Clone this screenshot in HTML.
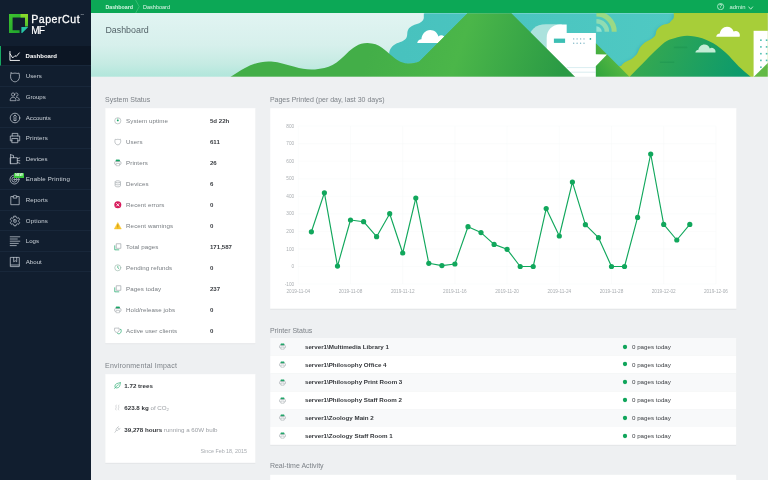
<!DOCTYPE html>
<html lang="en">
<head>
<meta charset="utf-8">
<title>PaperCut MF : Dashboard</title>
<style>
html,body{margin:0;padding:0;}
body{width:768px;height:480px;overflow:hidden;background:#eef0f2;font-family:"Liberation Sans",sans-serif;color:#333;position:relative;-webkit-font-smoothing:antialiased;}
.abs{position:absolute;}
*{box-sizing:border-box;}
/* sidebar */
#side{left:0;top:0;width:91.2px;height:480px;background:#111e2f;}
#logo-t1{left:31.2px;top:12.5px;font-size:10.6px;line-height:13px;color:#fff;letter-spacing:.52px;white-space:nowrap;-webkit-text-stroke:.28px #fff;}
#logo-t2{left:31.2px;top:25.1px;font-size:10.05px;line-height:12px;color:#fff;white-space:nowrap;letter-spacing:-.7px;-webkit-text-stroke:.2px #fff;}
.mi{left:0;width:91.2px;height:20.58px;border-bottom:.5px solid #18273a;color:#ccd3da;font-size:6.1px;line-height:20.4px;padding-left:25.8px;white-space:nowrap;}
.mi.act{background:#0c1624;color:#fff;font-weight:bold;font-size:6px;border-left:1.6px solid #17a862;padding-left:24.6px;}
.mi svg{position:absolute;left:8.6px;top:4.1px;width:12px;height:12px;overflow:visible;}
.mi.act svg{left:7px;}
/* top bar */
#top{left:91.2px;top:0;width:676.8px;height:15px;background:linear-gradient(180deg,#0ca856 12.9px,rgba(12,168,86,0) 13.9px);color:#d6f7e4;font-size:5.3px;line-height:14px;white-space:nowrap;}
#banner{left:91.2px;top:13px;width:676.8px;height:65px;overflow:hidden;background:linear-gradient(180deg,#e1f4f2 0,#d7f0ec 32px,#c5ebe3 51px,#b1e6db 63.7px);}
#ptitle{left:105.4px;top:24px;font-size:8.9px;line-height:12px;color:#55656a;white-space:nowrap;}
/* section titles */
.st{font-size:7px;line-height:9px;color:#7d8288;white-space:nowrap;}
.card{background:#fff;box-shadow:0 0 .6px rgba(0,0,0,.12);}
.row{left:105.4px;width:150.4px;height:21px;font-size:6.2px;line-height:21px;color:#777c81;white-space:nowrap;}
.row .lb{position:absolute;left:20.7px;top:0;letter-spacing:.07px;}
.row .vl{position:absolute;left:104.6px;top:0;font-weight:bold;font-size:6.1px;color:#3a3d42;}
.row svg{position:absolute;left:8.6px;top:7.6px;width:7.6px;height:7.6px;overflow:visible;}
.env{left:105.4px;width:150.4px;height:12px;font-size:6.2px;line-height:12px;color:#9a9ea3;white-space:nowrap;}
.env b{color:#33363a;}
.env span{position:absolute;left:18.9px;top:0;}
.env svg{position:absolute;left:8.8px;top:2.4px;width:7px;height:7px;overflow:visible;}
.pr{left:270.4px;width:465.6px;height:17.8px;font-size:6.2px;line-height:17.8px;white-space:nowrap;color:#3d4045;}
.pr b{position:absolute;left:34.6px;top:0;color:#34373b;}
.pr svg.dot{left:351.4px;top:5.9px;width:6px;height:6px;}
.pr em{position:absolute;left:361.6px;top:0;font-style:normal;}
.pr svg{position:absolute;left:8.6px;top:5.4px;width:7px;height:7px;overflow:visible;}
</style>
</head>
<body>
<div id="wrap" class="abs" style="left:0;top:0;width:768px;height:480px;overflow:hidden;will-change:transform">

<!-- ===== sidebar ===== -->
<div id="side" class="abs">
  <svg class="abs" style="left:8.7px;top:13.7px" width="19.6" height="19.8" viewBox="0 0 19.6 19.8">
    <defs>
      <linearGradient id="lg1" x1="0" y1="0" x2="1" y2="1"><stop offset="0" stop-color="#3fc32f"/><stop offset="1" stop-color="#159a2c"/></linearGradient>
      <linearGradient id="lg2" x1="0" y1="0" x2="0" y2="1"><stop offset="0" stop-color="#8fdc2a"/><stop offset="1" stop-color="#4fc22e"/></linearGradient>
    </defs>
    <path d="M0 0H19.6V3.6H3.6V16.2H10.6V19.8H0Z" fill="url(#lg1)"/>
    <path d="M11.6 0H19.6V12.4H16V3.6H11.6Z" fill="url(#lg2)"/>
    <path d="M12.4 12.9H19.4L12.4 19.8Z" fill="#27c5a6"/>
  </svg>
  <div id="logo-t1" class="abs">PaperCut</div>
  <div class="abs" style="left:80.6px;top:13.2px;font-size:2.4px;line-height:3px;color:#cfd5db;letter-spacing:0">TM</div>
  <div id="logo-t2" class="abs">MF</div>

  <div class="mi act abs" style="top:45.90px"><svg viewBox="0 0 24 24"><g fill="none" stroke="#ffffff" stroke-width="1.8" stroke-linecap="round" stroke-linejoin="round"><g transform="translate(1.4 0.4)"><path d="M2.5 2.5V20.5H21.6"/><path d="M2.8 7.5L8 15.5L12.6 10.8L15 12.6L21.2 5.4"/></g></g></svg>Dashboard</div>
  <div class="mi abs" style="top:66.48px"><svg viewBox="0 0 24 24" ><g fill="none" stroke="#c9d0d8" stroke-width="1.45" stroke-linecap="round" stroke-linejoin="round"><path d="M4.2 4C6.6 5.8 9 4.2 12 4.2C15 4.2 17.4 5.8 19.8 4C21.6 9 21.4 14.5 18.6 18.2C16.6 20.8 14 21.6 12 21.6C10 21.6 7.4 20.8 5.4 18.2C2.6 14.5 2.4 9 4.2 4Z"/></g></svg>Users</div>
  <div class="mi abs" style="top:87.06px"><svg viewBox="0 0 24 24" ><g fill="none" stroke="#c9d0d8" stroke-width="1.45" stroke-linecap="round" stroke-linejoin="round"><g transform="translate(0.6 0.2) scale(.9)"><circle cx="8.4" cy="7.6" r="3.6"/><path d="M1.8 20.4C1.8 16 4.6 13.6 8.4 13.6C12.2 13.6 15 16 15 20.4Z"/><path d="M14.2 4.4C16.6 3.6 19.4 5 19.4 7.8C19.4 10 17.8 11.4 16 11.4"/><path d="M15.6 13.6C19.6 13.4 22.4 16 22.4 20.4H18"/></g></g></svg>Groups</div>
  <div class="mi abs" style="top:107.64px"><svg viewBox="0 0 24 24" ><g fill="none" stroke="#c9d0d8" stroke-width="1.45" stroke-linecap="round" stroke-linejoin="round"><circle cx="12" cy="12" r="9.6"/><path d="M12 6.8A2.6 2.6 0 0 1 13.6 11.4L14.2 17H9.8L10.4 11.4A2.6 2.6 0 0 1 12 6.8Z"/></g></svg>Accounts</div>
  <div class="mi abs" style="top:128.22px"><svg viewBox="0 0 24 24" ><g fill="none" stroke="#c9d0d8" stroke-width="1.45" stroke-linecap="round" stroke-linejoin="round"><path d="M6.4 8V2.8H17.6V8"/><path d="M6.4 17.6H2.6V8H21.4V17.6H17.6"/><rect x="6.4" y="13" width="11.2" height="8.4"/></g></svg><span style="letter-spacing:.15px">Printers</span></div>
  <div class="mi abs" style="top:148.80px"><svg viewBox="0 0 24 24" ><g fill="none" stroke="#c9d0d8" stroke-width="1.45" stroke-linecap="round" stroke-linejoin="round"><path d="M3.2 3.4L9 5V9.4"/><path d="M3.2 3.4V21.4"/><rect x="3.2" y="9.4" width="13.4" height="12"/><path d="M16.6 11.4L21.6 9.8M16.6 15.4H21.6M16.6 19L21.6 20.6"/></g></svg>Devices</div>
  <div class="mi abs" style="top:169.38px"><svg viewBox="0 0 24 24" ><g fill="none" stroke="#c9d0d8" stroke-width="1.45" stroke-linecap="round" stroke-linejoin="round"><circle cx="11" cy="13" r="9"/><circle cx="11" cy="13" r="5.2"/><circle cx="11" cy="13" r="1.4"/></g></svg><span style="position:absolute;left:14.3px;top:3.9px;width:9.6px;height:4.6px;background:#3dcb3f;border-radius:.6px;color:#fff;font-size:3.2px;line-height:4.6px;font-weight:bold;text-align:center;padding:0;letter-spacing:.1px">NEW</span><span style="letter-spacing:.19px">Enable Printing</span></div>
  <div class="mi abs" style="top:189.96px"><svg viewBox="0 0 24 24" ><g fill="none" stroke="#c9d0d8" stroke-width="1.45" stroke-linecap="round" stroke-linejoin="round"><path d="M8.4 5H3.6V21.4H20.4V5H15.6"/><path d="M8.4 7.4V3.8H10.4C10.4 2 13.6 2 13.6 3.8H15.6V7.4Z"/></g></svg><span style="letter-spacing:.13px">Reports</span></div>
  <div class="mi abs" style="top:210.54px"><svg viewBox="0 0 24 24" ><g fill="none" stroke="#c9d0d8" stroke-width="1.45" stroke-linecap="round" stroke-linejoin="round"><path d="M10 2.4H14L14.7 5.2L16.6 6.3L19.4 5.5L21.4 9L19.3 11V13L21.4 15L19.4 18.5L16.6 17.7L14.7 18.8L14 21.6H10L9.3 18.8L7.4 17.7L4.6 18.5L2.6 15L4.7 13V11L2.6 9L4.6 5.5L7.4 6.3L9.3 5.2Z"/><rect x="9.6" y="9.6" width="4.8" height="4.8" rx=".6"/></g></svg><span style="letter-spacing:.17px">Options</span></div>
  <div class="mi abs" style="top:231.12px"><svg viewBox="0 0 24 24" ><g fill="none" stroke="#c9d0d8" stroke-width="1.45" stroke-linecap="round" stroke-linejoin="round"><path d="M2.4 3.6H21.6M2.4 8H16.6M2.4 12.4H21.6M2.4 16.8H18.6M2.4 21.2H14.6"/></g></svg>Logs</div>
  <div class="mi abs" style="top:251.70px"><svg viewBox="0 0 24 24" ><g fill="none" stroke="#c9d0d8" stroke-width="1.45" stroke-linecap="round" stroke-linejoin="round"><path d="M3.4 2.8H20.6V21.2H3.4Z"/><path d="M3.4 18H20.6"/><path d="M9.4 2.8V11.6L12.4 9.4L15.4 11.6V2.8"/></g></svg>About</div>
</div>

<!-- ===== top bar ===== -->
<div id="top" class="abs">
  <b class="abs" style="left:14.2px;top:0">Dashboard</b>
  <svg class="abs" style="left:43.4px;top:0" width="5" height="13.2" viewBox="0 0 5 13.2"><path d="M.6 0L4.2 6.6L.6 13.2" fill="none" stroke="#5fd08f" stroke-width=".5"/></svg>
  <span class="abs" style="left:51.9px;top:0;color:#e4f7ec;font-size:5.5px">Dashboard</span>
  <svg class="abs" style="left:626.2px;top:3.3px" width="7.2" height="7.2" viewBox="0 0 7.2 7.2"><circle cx="3.6" cy="3.6" r="3.1" fill="none" stroke="#c4f3d8" stroke-width=".8"/><text x="3.6" y="5.3" font-size="4.6" font-weight="bold" text-anchor="middle" fill="#c4f3d8" font-family="Liberation Sans, sans-serif">?</text></svg>
  <span class="abs" style="left:638.2px;top:0;font-size:5.9px">admin</span>
  <svg class="abs" style="left:657.2px;top:5.5px" width="5.4" height="4" viewBox="0 0 5.4 4"><path d="M.5 .6L2.7 3.2L4.9 .6" fill="none" stroke="#c4f3d8" stroke-width=".9"/></svg>
</div>

<!-- ===== banner ===== -->
<div id="banner" class="abs">
<svg class="abs" style="left:0;top:0" width="676.8" height="65" viewBox="91.2 13 676.8 65">
  <defs>
    <linearGradient id="gM" gradientUnits="userSpaceOnUse" x1="380" y1="20" x2="560" y2="80"><stop offset="0" stop-color="#43ae48"/><stop offset=".45" stop-color="#4bb649"/><stop offset="1" stop-color="#2a9a45"/></linearGradient>
    <linearGradient id="gH" gradientUnits="userSpaceOnUse" x1="230" y1="60" x2="420" y2="77"><stop offset="0" stop-color="#3aa845"/><stop offset="1" stop-color="#45b049"/></linearGradient>
    <linearGradient id="gD" gradientUnits="userSpaceOnUse" x1="650" y1="40" x2="740" y2="77"><stop offset="0" stop-color="#34a851"/><stop offset="1" stop-color="#0c9a6c"/></linearGradient>
    <linearGradient id="gT" gradientUnits="userSpaceOnUse" x1="597" y1="77" x2="625" y2="55"><stop offset="0" stop-color="#2fa43c"/><stop offset="1" stop-color="#62bd45"/></linearGradient>
    <linearGradient id="gTeal" gradientUnits="userSpaceOnUse" x1="400" y1="0" x2="680" y2="0"><stop offset="0" stop-color="#48c2be"/><stop offset="1" stop-color="#4fc9c3"/></linearGradient>
    <filter id="blr" x="-20%" y="-20%" width="140%" height="140%"><feGaussianBlur stdDeviation="1.6"/></filter>
  </defs>
  <!-- teal sky blob -->
  <path d="M424.6 13.5C425.5 17 423.5 21.5 419.4 23.2C415.5 24.6 410.5 25.4 408.3 29.8C406.6 33.2 408.6 36.6 405.2 39.6C401.6 42.8 396 42.6 392.4 46.6C388.4 51 388.2 57 392.6 60.4C398 64.6 410 65 420 62L700 13.5Z" fill="url(#gTeal)"/>
  <rect x="424" y="13.5" width="260" height="63.5" fill="url(#gTeal)"/>
  <!-- white cloud 1 -->
  <path d="M417.4 42.9C417.8 40.6 419.6 39.4 421.6 39.2C422 34.4 425.4 30 430.4 30C434.6 30 437.6 32.8 438.6 36.4C440.2 35 442.6 34.8 444.4 36.4C446.4 38 446.8 40.8 446 42.9Z" fill="#fff"/>
  <!-- paper-curl shadow behind printer -->
  <path d="M529 54V40C529 30 536 24.2 546 24.2H562V54Z" fill="#c4e9e3" opacity=".8"/>
  <!-- printer -->
  <path d="M546.9 38C546.9 30 552.6 24.5 560 24.5H566.9V33.1H596.1V54.2L607.2 54.5L596.1 65.9V78H560V62L546.9 54.2Z" fill="#fff"/>
  <rect x="554.1" y="38.6" width="11.2" height="4.3" fill="#3cbfb4"/>
  <g fill="#7fb7c6"><circle cx="573.9" cy="38.9" r=".7"/><circle cx="577.3" cy="38.9" r=".7"/><circle cx="580.8" cy="38.9" r=".7"/><circle cx="584.2" cy="38.9" r=".7"/><circle cx="573.9" cy="43.2" r=".7"/><circle cx="577.3" cy="43.2" r=".7"/><circle cx="580.8" cy="43.2" r=".7"/><circle cx="584.2" cy="43.2" r=".7"/></g>
  <circle cx="590.6" cy="38.9" r=".85" fill="#2fa79c"/>
  <g stroke="#cfe8ec" stroke-width=".8"><line x1="566.9" x2="596.1" y1="67.6" y2="67.6"/><line x1="566.9" x2="596.1" y1="72.2" y2="72.2"/></g>
  <!-- wifi arcs -->
  <g fill="none"><path d="M596.6 13.9A17.8 17.8 0 0 1 614.4 31.7" stroke="#9bd985" stroke-width="5"/><path d="M596.6 21.2A10.5 10.5 0 0 1 607.1 31.7" stroke="#8fdcb2" stroke-width="4.6"/></g>
  <path d="M596.6 26.3A5.4 5.4 0 0 1 602 31.7H596.6Z" fill="#93e3d4"/>
  <!-- lime hill (wavy) -->
  <path d="M673.8 13C674.4 16.4 674.2 18.4 672.4 19.8C670.8 21.4 670.4 22.6 668.9 23.3C666.6 24.6 663.8 24.2 661.8 25.5C659.4 27 658 28.6 656.8 30.4C655.8 32.2 656.4 33.8 655.4 35.4C654.2 37.2 652.4 38.4 650.5 39.6C648.2 41 645.4 42.2 643.4 43.9C641.8 45.2 640.8 46.6 639.9 48.1C639 49.8 638.6 51.6 637.7 53.1C636.4 55.4 634.2 57.2 632.1 58.7C629.8 60.2 627 61 625 62.3C623.4 63.4 622.2 64.6 621.5 65.8L617 67L629 80H768V13Z" fill="#2f9fb0" opacity=".45" filter="url(#blr)" transform="translate(-1.6 .8)"/>
  <path d="M673.8 13C674.4 16.4 674.2 18.4 672.4 19.8C670.8 21.4 670.4 22.6 668.9 23.3C666.6 24.6 663.8 24.2 661.8 25.5C659.4 27 658 28.6 656.8 30.4C655.8 32.2 656.4 33.8 655.4 35.4C654.2 37.2 652.4 38.4 650.5 39.6C648.2 41 645.4 42.2 643.4 43.9C641.8 45.2 640.8 46.6 639.9 48.1C639 49.8 638.6 51.6 637.7 53.1C636.4 55.4 634.2 57.2 632.1 58.7C629.8 60.2 627 61 625 62.3C623.4 63.4 622.2 64.6 621.5 65.8L617 67L629 80H768V13Z" fill="#a7ce39"/>
  <!-- dark green dome -->
  <path d="M629.6 77C634 72.4 638.8 67.6 643.4 63C647.4 59 651 55.2 654.7 51.6C658 48.4 661 45.2 664.6 42.4C667.8 40.2 670.8 39 674.5 38.2C679 37 683 35.8 687.4 35.8C697 35.8 708 39.5 717 45.5C724 50.5 729 55.5 732 59C737 64.5 741 68.5 744 71L752 77.8Z" fill="url(#gD)"/>
  <g fill="#1d9450" opacity=".5"><rect x="674" y="46.6" width="13.6" height="1.7" rx=".85"/><rect x="660" y="61.4" width="14.6" height="1.7" rx=".85"/></g>
  <!-- clouds right -->
  <path d="M716.4 36.7C716.8 34.6 718.4 33.6 720 33.6C720.6 29.8 723.4 26.8 727.2 26.8C730.4 26.8 732.8 28.8 733.8 31.6C735.2 30.6 737.2 30.6 738.6 32C740 33.2 740.4 35.2 739.8 36.7Z" fill="#fff"/>
  <path d="M695.6 52.6C695.8 50.8 697.2 49.8 698.6 49.8C699.2 46.8 701.6 44.6 704.6 44.6C707.2 44.6 709.2 46.2 710 48.4C711.2 47.6 713 47.6 714.2 48.8C715.6 49.8 716 51.4 715.6 52.6Z" fill="#c3ecd6"/>
  <!-- building -->
  <path d="M753.8 30.8H768V77H753.8Z" fill="#fff"/>
  <g fill="#4cbfb0"><rect x="760.3" y="39.4" width="1.6" height="1.6"/><rect x="766.0" y="39.4" width="1.6" height="1.6"/><rect x="760.3" y="46.1" width="1.6" height="1.6"/><rect x="766.0" y="46.1" width="1.6" height="1.6"/><rect x="760.3" y="52.9" width="1.6" height="1.6"/><rect x="766.0" y="52.9" width="1.6" height="1.6"/><rect x="760.3" y="59.6" width="1.6" height="1.6"/><rect x="766.0" y="59.6" width="1.6" height="1.6"/><rect x="760.3" y="66.4" width="1.6" height="1.6"/><rect x="766.0" y="66.4" width="1.6" height="1.6"/></g>
  <path d="M753.8 77L768 63V77Z" fill="#62b946"/>
  <!-- small green triangle right of printer -->
  <path d="M596.1 43.2L629.9 77H596.1Z" fill="url(#gT)"/>
  <path d="M595 54.2L607.2 54.5L596.1 65.9H595Z" fill="#fff"/>
  <!-- big mountain + front hills -->
  <path d="M467.85 13.2H511.6L575.4 77H400L419.6 61.45Z" fill="url(#gM)"/>
  <path d="M230.6 77C236 73.6 240 70.6 245.2 67.9C253 63.8 262 60.8 271.4 61.5C280 62.2 287 64.8 294.7 66.8C302 68.8 308 70 315.2 69.4C322 68.8 327.6 67.6 332.7 65C338.6 62 342.6 57.6 347.2 53.3C352.6 48 359 43 367.7 43.1C374 43.2 378.2 45 382.2 47.8C386 50.4 388.2 52.6 391 55C395 58.4 401 63.4 408 63.4C412.6 63.4 416.4 62.6 419.6 61.45L467.85 13.2L480 77Z" fill="url(#gM)"/>
  <rect id="bcover" x="91" y="76.7" width="678" height="3" fill="#eef0f2"/>
</svg>

</div>
<div id="ptitle" class="abs">Dashboard</div>

<svg class="abs" style="left:0;top:0" width="768" height="480" viewBox="0 0 768 480">
<g fill="#000" opacity=".045"><rect x="105.3" y="109" width="150.1" height="235.2"/><rect x="105.3" y="375" width="150.1" height="88.8"/><rect x="270.2" y="109.2" width="466.2" height="200.6"/><rect x="270.2" y="339" width="466" height="106.8"/></g>
<g fill="#fff"><rect x="105.3" y="108.2" width="150.1" height="235"/><rect x="105.3" y="374.2" width="150.1" height="88.6"/><rect x="270.2" y="108.2" width="466.2" height="200.5"/><rect x="270.2" y="474.8" width="466" height="10"/></g>
<rect x="270.2" y="338.00" width="466" height="17.8" fill="#f8f9fa"/><rect x="270.2" y="355.80" width="466" height="17.8" fill="#fff"/><rect x="270.2" y="373.60" width="466" height="17.8" fill="#f8f9fa"/><rect x="270.2" y="391.40" width="466" height="17.8" fill="#fff"/><rect x="270.2" y="409.20" width="466" height="17.8" fill="#f8f9fa"/><rect x="270.2" y="427.00" width="466" height="17.8" fill="#fff"/>
</svg>
<!-- ===== system status ===== -->
<div class="st abs" style="left:105px;top:94.6px">System Status</div>
<div class="row abs" style="top:109.9px"><svg viewBox="0 0 16 16"><g fill="none" stroke-width="1.4"><circle cx="8" cy="8" r="6.5" stroke="#a9b0b2"/></g><circle cx="8" cy="7.2" r="2" fill="#18a566"/><path d="M8 3V5" stroke="#18a566" stroke-width="1.3"/></svg><span class="lb">System uptime</span><span class="vl">5d 22h</span></div>
<div class="row abs" style="top:130.9px"><svg viewBox="0 0 16 16"><path d="M2.6 2.6C4.4 3.8 6 2.8 8 2.8C10 2.8 11.6 3.8 13.4 2.6C14.6 6 14.4 9.6 12.6 12C11.2 13.8 9.4 14.4 8 14.4C6.6 14.4 4.8 13.8 3.4 12C1.6 9.6 1.4 6 2.6 2.6Z" fill="none" stroke="#a0a6ab" stroke-width="1.4"/></svg><span class="lb">Users</span><span class="vl">611</span></div>
<div class="row abs" style="top:151.9px"><svg viewBox="0 0 16 16"><g fill="none" stroke-width="1.5" stroke-linejoin="round"><path d="M4.4 4.6V2H11.6V4.6Z" stroke="#18a566" fill="#18a566"/><path d="M4.2 11.6H3C2 11.6 1.4 10.8 1.4 10V7C1.4 6 2.2 5.4 3 5.4H13C14 5.4 14.6 6.2 14.6 7V10C14.6 11 13.8 11.6 13 11.6H11.8" stroke="#a0a6ab"/><rect x="4.4" y="9.2" width="7.2" height="5" stroke="#b4babd"/></g></svg><span class="lb">Printers</span><span class="vl">26</span></div>
<div class="row abs" style="top:172.9px"><svg viewBox="0 0 16 16"><g fill="none" stroke="#a0a6ab" stroke-width="1.4"><ellipse cx="8" cy="3.8" rx="5.6" ry="2.2"/><path d="M2.4 3.8V12.2C2.4 13.4 4.8 14.4 8 14.4C11.2 14.4 13.6 13.4 13.6 12.2V3.8"/><path d="M2.4 8C2.4 9.2 4.8 10.2 8 10.2C11.2 10.2 13.6 9.2 13.6 8"/></g></svg><span class="lb">Devices</span><span class="vl">6</span></div>
<div class="row abs" style="top:193.9px"><svg viewBox="0 0 16 16"><circle cx="8" cy="8" r="7.4" fill="#d81b5c"/><path d="M5.4 5.4L10.6 10.6M10.6 5.4L5.4 10.6" stroke="#fff" stroke-width="1.9" stroke-linecap="round"/></svg><span class="lb">Recent errors</span><span class="vl">0</span></div>
<div class="row abs" style="top:214.9px"><svg viewBox="0 0 16 16"><path d="M8 1L15.4 14.6H.6Z" fill="#f8c52c" stroke="#f8c52c" stroke-width="1" stroke-linejoin="round"/><path d="M8 5.6V10" stroke="#b98610" stroke-width="1.6" stroke-linecap="round"/><circle cx="8" cy="12.4" r=".95" fill="#b98610"/></svg><span class="lb">Recent warnings</span><span class="vl">0</span></div>
<div class="row abs" style="top:235.9px"><svg viewBox="0 0 16 16"><g fill="none" stroke-width="1.5" stroke-linejoin="round"><path d="M1.6 5V14.4H11" stroke="#18a566"/><rect x="4.8" y="1.6" width="9.6" height="9.6" stroke="#a0a6ab"/></g></svg><span class="lb">Total pages</span><span class="vl">171,587</span></div>
<div class="row abs" style="top:256.9px"><svg viewBox="0 0 16 16"><g fill="none" stroke-width="1.4" stroke-linecap="round"><circle cx="8" cy="8" r="6.4" stroke="#9bb8ac"/><path d="M8 4.6V8L10 9.4" stroke="#18a566"/></g></svg><span class="lb">Pending refunds</span><span class="vl">0</span></div>
<div class="row abs" style="top:277.9px"><svg viewBox="0 0 16 16"><g fill="none" stroke-width="1.5" stroke-linejoin="round"><path d="M1.6 5V14.4H11" stroke="#18a566"/><rect x="4.8" y="1.6" width="9.6" height="9.6" stroke="#a0a6ab"/></g></svg><span class="lb">Pages today</span><span class="vl">237</span></div>
<div class="row abs" style="top:298.9px"><svg viewBox="0 0 16 16"><g fill="none" stroke-width="1.5" stroke-linejoin="round"><path d="M4.4 4.6V2H11.6V4.6Z" stroke="#18a566" fill="#18a566"/><path d="M4.2 11.6H3C2 11.6 1.4 10.8 1.4 10V7C1.4 6 2.2 5.4 3 5.4H13C14 5.4 14.6 6.2 14.6 7V10C14.6 11 13.8 11.6 13 11.6H11.8" stroke="#a0a6ab"/><rect x="4.4" y="9.2" width="7.2" height="5" stroke="#b4babd"/></g></svg><span class="lb">Hold/release jobs</span><span class="vl">0</span></div>
<div class="row abs" style="top:319.9px"><svg viewBox="0 0 16 16"><g fill="none" stroke-width="1.4"><path d="M1.6 2C3 3 4.4 2.2 6 2.2C7.6 2.2 9 3 10.4 2C11.4 4.6 11.2 7.6 9.8 9.4C8.8 10.8 7.2 11.4 6 11.4C4.8 11.4 3.2 10.8 2.2 9.4C.8 7.6 .6 4.6 1.6 2Z" stroke="#a0a6ab"/><path d="M12.6 5.4C13.4 5.4 14 5.2 14.6 4.8C15.6 7.4 15.4 10.4 14 12.2C13 13.6 11.4 14.4 10.2 14.4C9 14.4 7.6 13.8 6.6 12.6" stroke="#18a566"/></g></svg><span class="lb">Active user clients</span><span class="vl">0</span></div>

<!-- ===== environmental impact ===== -->
<div class="st abs" style="left:105px;top:360.6px;letter-spacing:.22px">Environmental Impact</div>
<div class="env abs" style="top:380px"><svg viewBox="0 0 16 16"><g fill="none" stroke="#18a566" stroke-width="1.4" stroke-linecap="round" stroke-linejoin="round"><path d="M14.2 1.8C14.6 7 13 13.6 6.4 13.6C3.4 13.6 2 11.6 2 9.4C2 4.4 8 2.4 14.2 1.8Z"/><path d="M1.6 14.6C4 11 6.6 8.4 10 6.4"/></g></svg><span><b>1.72 trees</b></span></div>
<div class="env abs" style="top:401.6px"><svg viewBox="0 0 16 16"><g fill="none" stroke="#b4b8bc" stroke-width="1.3" stroke-linecap="round"><path d="M5 2.4C2.6 5 6.4 7 4.4 9.6C3.4 11 3.6 12.4 4.6 13.6"/><path d="M11 2.4C8.6 5 12.4 7 10.4 9.6C9.4 11 9.6 12.4 10.6 13.6"/></g></svg><span><b>623.8 kg</b> of CO<sub style="font-size:4.2px;line-height:0;vertical-align:-1.2px">2</sub></span></div>
<div class="env abs" style="top:423.9px"><svg viewBox="0 0 16 16"><g fill="none" stroke="#a9adb1" stroke-width="1.3" stroke-linecap="round" stroke-linejoin="round"><path d="M10.6 1.4L5.6 5.8C4.4 7 4.6 8.6 5.6 9.6C6.6 10.6 8.4 10.6 9.4 9.6L14 5"/><path d="M5.6 9.6L2 14.6"/><path d="M8 3.6L12 7.4"/></g></svg><span><b>39,278 hours</b> running a 60W bulb</span></div>
<div class="abs" style="left:105.4px;top:445.6px;width:141.6px;text-align:right;font-size:5.36px;line-height:10px;color:#a7abb0;white-space:nowrap">Since Feb 18, 2015</div>

<!-- ===== chart ===== -->
<div class="st abs" style="left:269.9px;top:94.6px">Pages Printed (per day, last 30 days)</div>
<svg class="abs" style="left:0;top:0" width="768" height="480" viewBox="0 0 768 480">
<g stroke="#f7f8f9" stroke-width="0.5"><line x1="298" x2="716" y1="284.1" y2="284.1"/><line x1="298" x2="716" y1="266.5" y2="266.5"/><line x1="298" x2="716" y1="248.9" y2="248.9"/><line x1="298" x2="716" y1="231.4" y2="231.4"/><line x1="298" x2="716" y1="213.8" y2="213.8"/><line x1="298" x2="716" y1="196.3" y2="196.3"/><line x1="298" x2="716" y1="178.8" y2="178.8"/><line x1="298" x2="716" y1="161.2" y2="161.2"/><line x1="298" x2="716" y1="143.7" y2="143.7"/><line x1="298" x2="716" y1="126.1" y2="126.1"/><line y1="126.1" y2="284.1" x1="298.3" x2="298.3"/><line y1="126.1" y2="284.1" x1="350.5" x2="350.5"/><line y1="126.1" y2="284.1" x1="402.7" x2="402.7"/><line y1="126.1" y2="284.1" x1="454.9" x2="454.9"/><line y1="126.1" y2="284.1" x1="507.1" x2="507.1"/><line y1="126.1" y2="284.1" x1="559.3" x2="559.3"/><line y1="126.1" y2="284.1" x1="611.5" x2="611.5"/><line y1="126.1" y2="284.1" x1="663.7" x2="663.7"/><line y1="126.1" y2="284.1" x1="715.9" x2="715.9"/></g>
<g font-size="4.7" fill="#a9adb1"><text x="294.2" y="285.7" text-anchor="end">-100</text><text x="294.2" y="268.1" text-anchor="end">0</text><text x="294.2" y="250.5" text-anchor="end">100</text><text x="294.2" y="233.0" text-anchor="end">200</text><text x="294.2" y="215.4" text-anchor="end">300</text><text x="294.2" y="197.9" text-anchor="end">400</text><text x="294.2" y="180.3" text-anchor="end">500</text><text x="294.2" y="162.8" text-anchor="end">600</text><text x="294.2" y="145.2" text-anchor="end">700</text><text x="294.2" y="127.7" text-anchor="end">800</text><text x="298.3" y="293" text-anchor="middle">2019-11-04</text><text x="350.5" y="293" text-anchor="middle">2019-11-08</text><text x="402.7" y="293" text-anchor="middle">2019-11-12</text><text x="454.9" y="293" text-anchor="middle">2019-11-16</text><text x="507.1" y="293" text-anchor="middle">2019-11-20</text><text x="559.3" y="293" text-anchor="middle">2019-11-24</text><text x="611.5" y="293" text-anchor="middle">2019-11-28</text><text x="663.7" y="293" text-anchor="middle">2019-12-02</text><text x="715.9" y="293" text-anchor="middle">2019-12-06</text></g>
<polyline points="311.4,231.8 324.4,192.8 337.5,266.1 350.5,220.0 363.6,221.7 376.6,236.7 389.7,213.7 402.7,253.0 415.8,198.1 428.8,263.3 441.9,265.6 454.9,264.0 468.0,226.7 481.0,232.6 494.1,244.4 507.1,249.3 520.2,266.5 533.2,266.5 546.2,208.6 559.3,236.0 572.4,182.1 585.4,224.7 598.5,237.7 611.5,266.5 624.5,266.5 637.6,217.4 650.7,154.0 663.7,224.4 676.8,240.0 689.8,224.4" fill="none" stroke="#11a75c" stroke-width="1.15" stroke-linejoin="round"/>
<g fill="#11a75c"><circle cx="311.4" cy="231.8" r="2.6"/><circle cx="324.4" cy="192.8" r="2.6"/><circle cx="337.5" cy="266.1" r="2.6"/><circle cx="350.5" cy="220.0" r="2.6"/><circle cx="363.6" cy="221.7" r="2.6"/><circle cx="376.6" cy="236.7" r="2.6"/><circle cx="389.7" cy="213.7" r="2.6"/><circle cx="402.7" cy="253.0" r="2.6"/><circle cx="415.8" cy="198.1" r="2.6"/><circle cx="428.8" cy="263.3" r="2.6"/><circle cx="441.9" cy="265.6" r="2.6"/><circle cx="454.9" cy="264.0" r="2.6"/><circle cx="468.0" cy="226.7" r="2.6"/><circle cx="481.0" cy="232.6" r="2.6"/><circle cx="494.1" cy="244.4" r="2.6"/><circle cx="507.1" cy="249.3" r="2.6"/><circle cx="520.2" cy="266.5" r="2.6"/><circle cx="533.2" cy="266.5" r="2.6"/><circle cx="546.2" cy="208.6" r="2.6"/><circle cx="559.3" cy="236.0" r="2.6"/><circle cx="572.4" cy="182.1" r="2.6"/><circle cx="585.4" cy="224.7" r="2.6"/><circle cx="598.5" cy="237.7" r="2.6"/><circle cx="611.5" cy="266.5" r="2.6"/><circle cx="624.5" cy="266.5" r="2.6"/><circle cx="637.6" cy="217.4" r="2.6"/><circle cx="650.7" cy="154.0" r="2.6"/><circle cx="663.7" cy="224.4" r="2.6"/><circle cx="676.8" cy="240.0" r="2.6"/><circle cx="689.8" cy="224.4" r="2.6"/></g>
</svg>

<!-- ===== printer status ===== -->
<div class="st abs" style="left:269.9px;top:326px">Printer Status</div>
<div class="pr g abs" style="top:337.8px"><svg viewBox="0 0 16 16"><g fill="none" stroke-width="1.5" stroke-linejoin="round"><path d="M4.4 4.6V2H11.6V4.6Z" stroke="#18a566" fill="#18a566"/><path d="M4.2 11.6H3C2 11.6 1.4 10.8 1.4 10V7C1.4 6 2.2 5.4 3 5.4H13C14 5.4 14.6 6.2 14.6 7V10C14.6 11 13.8 11.6 13 11.6H11.8" stroke="#a0a6ab"/><rect x="4.4" y="9.2" width="7.2" height="5" stroke="#b4babd"/></g></svg><b>server1\Multimedia Library 1</b><svg class="dot" viewBox="0 0 6 6"><circle cx="3" cy="3" r="2.15" fill="#10a55b"/></svg><em>0 pages today</em></div>
<div class="pr w abs" style="top:355.6px"><svg viewBox="0 0 16 16"><g fill="none" stroke-width="1.5" stroke-linejoin="round"><path d="M4.4 4.6V2H11.6V4.6Z" stroke="#18a566" fill="#18a566"/><path d="M4.2 11.6H3C2 11.6 1.4 10.8 1.4 10V7C1.4 6 2.2 5.4 3 5.4H13C14 5.4 14.6 6.2 14.6 7V10C14.6 11 13.8 11.6 13 11.6H11.8" stroke="#a0a6ab"/><rect x="4.4" y="9.2" width="7.2" height="5" stroke="#b4babd"/></g></svg><b>server1\Philosophy Office 4</b><svg class="dot" viewBox="0 0 6 6"><circle cx="3" cy="3" r="2.15" fill="#10a55b"/></svg><em>0 pages today</em></div>
<div class="pr g abs" style="top:373.4px"><svg viewBox="0 0 16 16"><g fill="none" stroke-width="1.5" stroke-linejoin="round"><path d="M4.4 4.6V2H11.6V4.6Z" stroke="#18a566" fill="#18a566"/><path d="M4.2 11.6H3C2 11.6 1.4 10.8 1.4 10V7C1.4 6 2.2 5.4 3 5.4H13C14 5.4 14.6 6.2 14.6 7V10C14.6 11 13.8 11.6 13 11.6H11.8" stroke="#a0a6ab"/><rect x="4.4" y="9.2" width="7.2" height="5" stroke="#b4babd"/></g></svg><b>server1\Philosophy Print Room 3</b><svg class="dot" viewBox="0 0 6 6"><circle cx="3" cy="3" r="2.15" fill="#10a55b"/></svg><em>0 pages today</em></div>
<div class="pr w abs" style="top:391.2px"><svg viewBox="0 0 16 16"><g fill="none" stroke-width="1.5" stroke-linejoin="round"><path d="M4.4 4.6V2H11.6V4.6Z" stroke="#18a566" fill="#18a566"/><path d="M4.2 11.6H3C2 11.6 1.4 10.8 1.4 10V7C1.4 6 2.2 5.4 3 5.4H13C14 5.4 14.6 6.2 14.6 7V10C14.6 11 13.8 11.6 13 11.6H11.8" stroke="#a0a6ab"/><rect x="4.4" y="9.2" width="7.2" height="5" stroke="#b4babd"/></g></svg><b>server1\Philosophy Staff Room 2</b><svg class="dot" viewBox="0 0 6 6"><circle cx="3" cy="3" r="2.15" fill="#10a55b"/></svg><em>0 pages today</em></div>
<div class="pr g abs" style="top:409px"><svg viewBox="0 0 16 16"><g fill="none" stroke-width="1.5" stroke-linejoin="round"><path d="M4.4 4.6V2H11.6V4.6Z" stroke="#18a566" fill="#18a566"/><path d="M4.2 11.6H3C2 11.6 1.4 10.8 1.4 10V7C1.4 6 2.2 5.4 3 5.4H13C14 5.4 14.6 6.2 14.6 7V10C14.6 11 13.8 11.6 13 11.6H11.8" stroke="#a0a6ab"/><rect x="4.4" y="9.2" width="7.2" height="5" stroke="#b4babd"/></g></svg><b>server1\Zoology Main 2</b><svg class="dot" viewBox="0 0 6 6"><circle cx="3" cy="3" r="2.15" fill="#10a55b"/></svg><em>0 pages today</em></div>
<div class="pr w abs" style="top:426.8px"><svg viewBox="0 0 16 16"><g fill="none" stroke-width="1.5" stroke-linejoin="round"><path d="M4.4 4.6V2H11.6V4.6Z" stroke="#18a566" fill="#18a566"/><path d="M4.2 11.6H3C2 11.6 1.4 10.8 1.4 10V7C1.4 6 2.2 5.4 3 5.4H13C14 5.4 14.6 6.2 14.6 7V10C14.6 11 13.8 11.6 13 11.6H11.8" stroke="#a0a6ab"/><rect x="4.4" y="9.2" width="7.2" height="5" stroke="#b4babd"/></g></svg><b>server1\Zoology Staff Room 1</b><svg class="dot" viewBox="0 0 6 6"><circle cx="3" cy="3" r="2.15" fill="#10a55b"/></svg><em>0 pages today</em></div>

<!-- ===== real-time activity ===== -->
<div class="st abs" style="left:269.9px;top:461.4px">Real-time Activity</div>

</div>
</body>
</html>
